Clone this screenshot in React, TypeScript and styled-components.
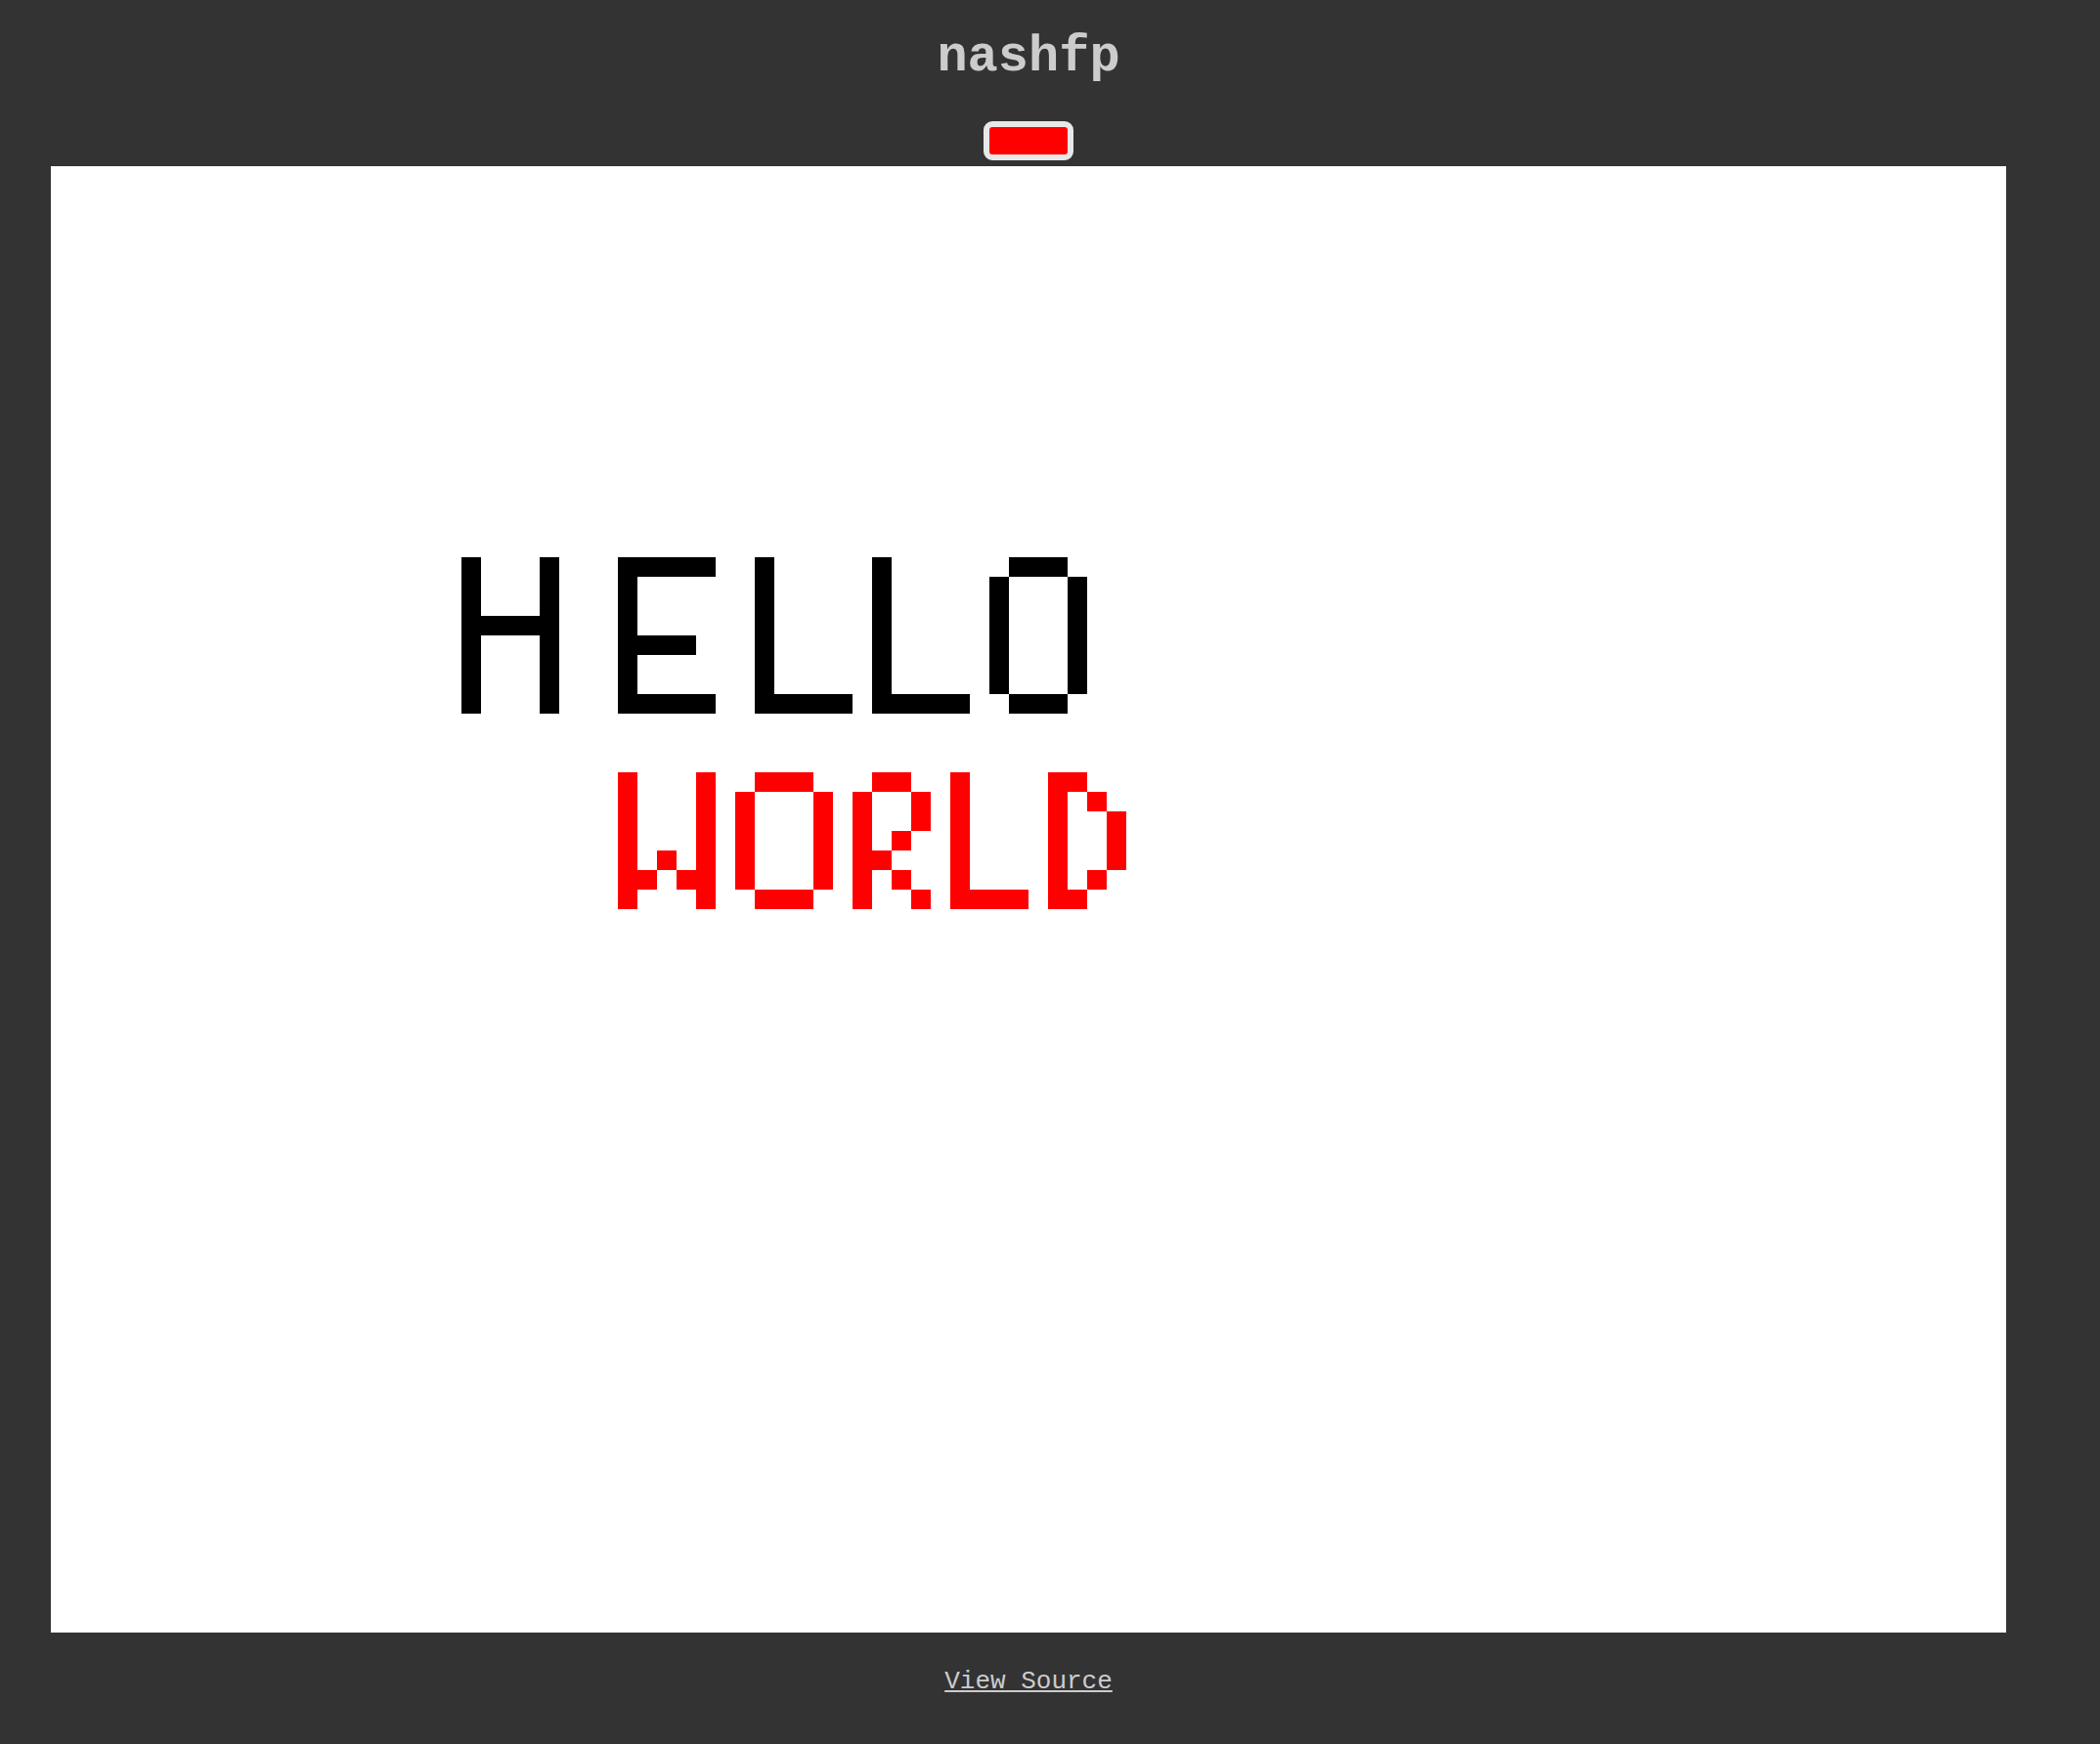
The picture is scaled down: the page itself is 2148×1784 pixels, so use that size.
import React from "react";
import styled, { createGlobalStyle } from "styled-components";

const MONO = `"Courier New", "Nimbus Mono PS", "Nimbus Mono L", "FreeMono", "Liberation Mono", monospace`;

const GlobalStyle = createGlobalStyle`
  html, body {
    margin: 0;
    padding: 0;
    background: #333333;
  }
  body {
    font-family: ${MONO};
    color: #cccccc;
  }
`;

const Page = styled.div`
  display: flex;
  justify-content: flex-start;
  padding-left: 52px;
  min-height: 1784px;
  box-sizing: border-box;
`;

const Column = styled.main`
  width: 2000px;
  display: flex;
  flex-direction: column;
  align-items: center;
`;

const Title = styled.h1`
  margin: 0;
  padding-top: 30px;
  font-family: ${MONO};
  font-weight: bold;
  font-size: 52px;
  line-height: 58px;
  color: #cccccc;
`;

const Swatch = styled.button<{ $color: string }>`
  margin-top: 36px;
  width: 92px;
  height: 40px;
  box-sizing: border-box;
  padding: 0;
  border: 6px solid #e8e8e8;
  border-radius: 9px;
  background: ${(p) => p.$color};
  cursor: pointer;
`;

const Canvas = styled.div`
  margin-top: 6px;
  width: 2000px;
  height: 1500px;
  background: #ffffff;
  display: block;
`;

const Footer = styled.p`
  margin: 35px 0 0;
  font-size: 26px;
  line-height: 30px;
`;

const SourceLink = styled.a`
  font-family: ${MONO};
  color: #cccccc;
  text-decoration: underline;
`;

type Cell = [number, number, number?, number?]; // col, row, w, h

const hello: Cell[] = [
  // H
  [0, 0, 1, 8],
  [4, 0, 1, 8],
  [1, 3, 3, 1],
  // E
  [8, 0, 1, 8],
  [9, 0, 4, 1],
  [9, 4, 3, 1],
  [9, 7, 4, 1],
  // L
  [15, 0, 1, 8],
  [16, 7, 4, 1],
  // L
  [21, 0, 1, 8],
  [22, 7, 4, 1],
  // O
  [27, 1, 1, 6],
  [31, 1, 1, 6],
  [28, 0, 3, 1],
  [28, 7, 3, 1],
];

const world: Cell[] = [
  // W
  [0, 0, 1, 7],
  [4, 0, 1, 7],
  [2, 4, 1, 1],
  [1, 5, 1, 1],
  [3, 5, 1, 1],
  // O
  [6, 1, 1, 5],
  [10, 1, 1, 5],
  [7, 0, 3, 1],
  [7, 6, 3, 1],
  // R
  [12, 1, 1, 6],
  [13, 0, 2, 1],
  [15, 1, 1, 2],
  [14, 3, 1, 1],
  [13, 4, 1, 1],
  [14, 5, 1, 1],
  [15, 6, 1, 1],
  // L
  [17, 0, 1, 7],
  [18, 6, 3, 1],
  // D
  [22, 0, 1, 7],
  [23, 0, 1, 1],
  [23, 6, 1, 1],
  [24, 1, 1, 1],
  [24, 5, 1, 1],
  [25, 2, 1, 3],
];

const PixelWord: React.FC<{ cells: Cell[]; x: number; y: number; color: string }> = ({
  cells,
  x,
  y,
  color,
}) => (
  <g fill={color}>
    {cells.map(([c, r, w = 1, h = 1], i) => (
      <rect key={i} x={x + c} y={y + r} width={w} height={h} />
    ))}
  </g>
);

export default function App() {
  return (
    <>
      <GlobalStyle />
      <Page>
        <Column>
          <Title>nashfp</Title>
          <Swatch $color="#ff0000" aria-label="colour" />
          <Canvas>
            <svg
              width="2000"
              height="1500"
              viewBox="0 0 100 75"
              shapeRendering="crispEdges"
              style={{ display: "block" }}
            >
              <PixelWord cells={hello} x={21} y={20} color="#000000" />
              <PixelWord cells={world} x={29} y={31} color="#ff0000" />
            </svg>
          </Canvas>
          <Footer>
            <SourceLink href="#">View Source</SourceLink>
          </Footer>
        </Column>
      </Page>
    </>
  );
}
